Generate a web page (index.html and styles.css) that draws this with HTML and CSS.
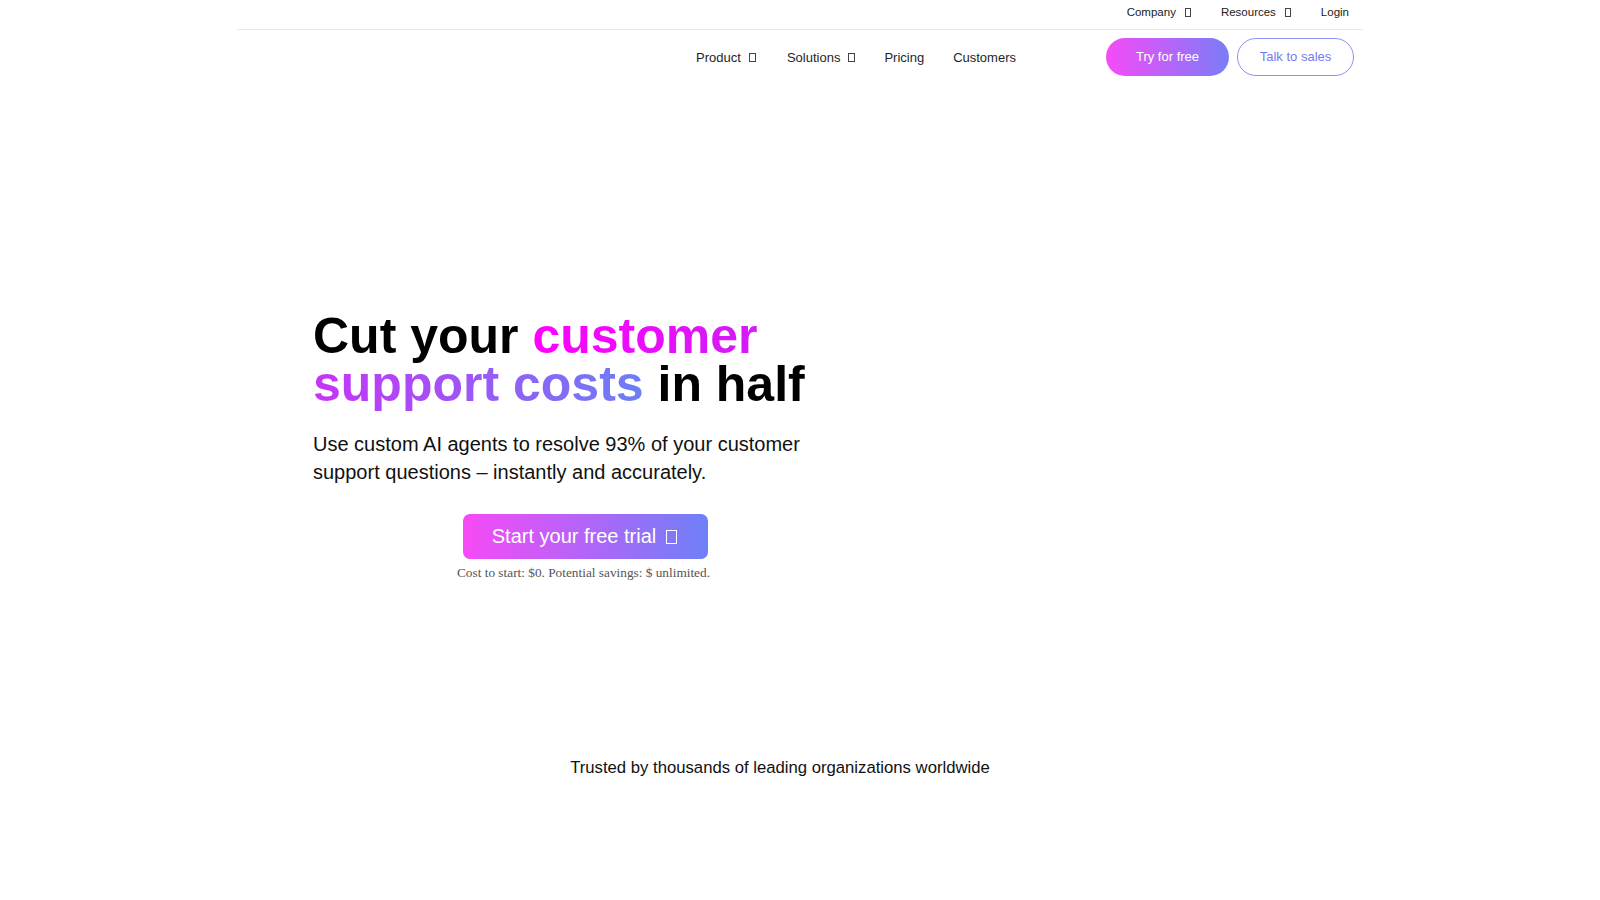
FILE: index.html
```html
<!DOCTYPE html>
<html lang="en">
<head>
<meta charset="utf-8">
<title>Cut your customer support costs in half</title>
<link rel="stylesheet" href="styles.css">
</head>
<body>
<div class="page">
  <div class="topbar">
    <a class="top-link" href="#">Company<span class="tofu tofu-sm"></span></a>
    <a class="top-link" href="#">Resources<span class="tofu tofu-sm"></span></a>
    <a class="top-link" href="#">Login</a>
  </div>
  <header class="navrow">
    <nav class="nav">
      <a class="nav-link nav-first" href="#">Product<span class="tofu"></span></a>
      <a class="nav-link" href="#">Solutions<span class="tofu"></span></a>
      <a class="nav-link" href="#">Pricing</a>
      <a class="nav-link" href="#">Customers</a>
    </nav>
    <div class="actions">
      <a class="btn btn-try" href="#">Try for free</a>
      <a class="btn btn-sales" href="#">Talk to sales</a>
    </div>
  </header>
  <main class="hero">
    <div class="hero-col">
      <h1 class="headline"><span class="line">Cut your <span class="grad grad-a">customer</span></span><span class="line"><span class="grad grad-b">support costs</span> in half</span></h1>
      <p class="sub">Use custom AI agents to resolve 93% of your customer support questions – instantly and accurately.</p>
      <div class="cta-wrap">
        <a class="cta" href="#">Start your free trial<span class="tofu tofu-lg"></span></a>
        <p class="cta-note">Cost to start: $0. Potential savings: $ unlimited.</p>
      </div>
    </div>
  </main>
  <section class="trusted">
    <p class="trusted-text">Trusted by thousands of leading organizations worldwide</p>
  </section>
</div>
</body>
</html>
```

FILE: styles.css
```css
* { box-sizing: border-box; }
html, body { background: #fff; }
body {
  margin: 0;
  font-family: "Liberation Sans", Arial, sans-serif;
  color: #000;
}
a { text-decoration: none; color: inherit; }
.page {
  width: 1126px;
  margin: 0 auto;
}
.topbar {
  display: flex;
  justify-content: flex-end;
  align-items: flex-start;
  gap: 30px;
  height: 30px;
  padding: 4px 14px 0 0;
  border-bottom: 1px solid #e8e8e8;
}
.top-link {
  font-size: 11.5px;
  line-height: 17px;
  color: #222;
  display: inline-flex;
  align-items: center;
}
.tofu {
  display: inline-block;
  width: 7px;
  height: 9px;
  border: 1px solid #444;
  margin-left: 8px;
}
.tofu-sm {
  width: 6px;
  height: 9px;
  margin-left: 9px;
}
.navrow {
  display: flex;
  justify-content: flex-end;
  align-items: center;
  padding: 8px 9px 8px 0;
}
.nav {
  display: flex;
  align-items: center;
  gap: 29px;
  margin-right: 90px;
}
.nav-link {
  font-size: 13px;
  line-height: 18px;
  padding-top: 1px;
  color: #1d1f2a;
  display: inline-flex;
  align-items: center;
}
.nav-first { margin-right: 2px; }
.actions {
  display: flex;
  gap: 8px;
}
.btn {
  display: inline-flex;
  align-items: center;
  justify-content: center;
  height: 38px;
  padding-bottom: 1px;
  border-radius: 19px;
  font-size: 13px;
}
.btn-try {
  width: 123px;
  color: #fff;
  background: linear-gradient(90deg, #f54bf7 0%, #7a7df7 100%);
}
.btn-sales {
  width: 117px;
  color: #7779ef;
  border: 1px solid #8d8ff5;
}
.hero {
  padding: 228px 0 0 76px;
}
.hero-col {
  width: 545px;
}
.headline {
  margin: 0;
  font-size: 50px;
  font-weight: 700;
  color: #000;
}
.line {
  display: block;
  height: 48px;
  line-height: 48px;
  white-space: nowrap;
}
.grad {
  -webkit-background-clip: text;
  background-clip: text;
  color: transparent;
}
.grad-a {
  background-image: linear-gradient(90deg, #ff00ff 0%, #d21cf6 100%);
}
.grad-b {
  background-image: linear-gradient(90deg, #c734f7 0%, #6b7ff5 100%);
}
.sub {
  margin: 22px 0 0;
  font-size: 20px;
  line-height: 28px;
  color: #111;
}
.cta-wrap {
  display: flex;
  flex-direction: column;
  align-items: center;
  margin-top: 28px;
}
.cta {
  display: inline-flex;
  align-items: center;
  height: 45px;
  padding: 0 31px 0 29px;
  border-radius: 7px;
  font-size: 20px;
  color: #fff;
  background: linear-gradient(90deg, #f74af6 0%, #6e80f8 100%);
}
.tofu-lg {
  width: 11px;
  height: 14px;
  border: 1.5px solid #fff;
  margin-left: 10px;
}
.cta-note {
  margin: 6px 4px 0 0;
  font-family: "Liberation Serif", "Times New Roman", serif;
  font-size: 13.3px;
  line-height: 16px;
  color: #555;
}
.trusted {
  display: flex;
  justify-content: center;
  padding-right: 40px;
  margin-top: 177px;
}
.trusted-text {
  margin: 0;
  font-size: 16.7px;
  line-height: 20px;
  color: #111;
}
```
